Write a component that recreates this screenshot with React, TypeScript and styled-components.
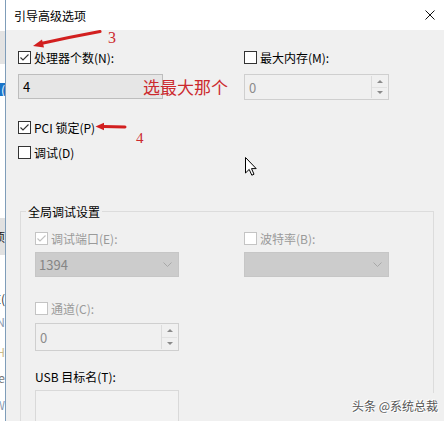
import React from "react";
import styled, { createGlobalStyle } from "styled-components";

const GlobalStyle = createGlobalStyle`
  html, body { margin: 0; padding: 0; background: #ffffff; }
  body {
    font-family: "Noto Sans CJK SC", "Noto Sans", sans-serif;
    width: 444px;
    height: 421px;
    overflow: hidden;
  }
  * { box-sizing: border-box; }
`;

const Page = styled.div`
  position: relative;
  display: flex;
  width: 444px;
  height: 421px;
  overflow: hidden;
`;

const Strip = styled.div`
  width: 5px;
  flex-shrink: 0;
  display: flex;
  flex-direction: column;
  overflow: hidden;
`;

const StripSeg = styled.div<{ $h: number; $bg: string; $fg?: string }>`
  height: ${(p) => p.$h}px;
  flex-shrink: 0;
  background: ${(p) => p.$bg};
  color: ${(p) => p.$fg ?? "#333"};
  font-size: 12px;
  line-height: ${(p) => p.$h}px;
  display: flex;
  justify-content: flex-end;
  overflow: hidden;
  white-space: nowrap;
`;

const Dialog = styled.div`
  flex: 1;
  display: flex;
  flex-direction: column;
  border-left: 1px solid #7f9db9;
  min-width: 0;
`;

const TitleBar = styled.div`
  height: 30px;
  flex-shrink: 0;
  background: #ffffff;
  display: flex;
  align-items: center;
  justify-content: space-between;
  padding: 0 9px 0 8px;
`;

const Title = styled.span`
  font-size: 12px;
  line-height: 17px;
  color: #000;
`;

const CloseIcon = styled.svg`
  width: 10px;
  height: 10px;
  display: block;
`;

const Body = styled.div`
  flex: 1;
  background: #f0f0f0;
  padding: 19px 0 0 12px;
  display: flex;
  flex-direction: column;
  align-items: flex-start;
`;

const TwoCol = styled.div<{ $cols: string; $gap: number }>`
  display: grid;
  grid-template-columns: ${(p) => p.$cols};
  column-gap: ${(p) => p.$gap}px;
`;

const Field = styled.div<{ $gap: number; $mt?: number }>`
  display: flex;
  flex-direction: column;
  gap: ${(p) => p.$gap}px;
  margin-top: ${(p) => p.$mt ?? 0}px;
`;

const OptionList = styled.div`
  display: flex;
  flex-direction: column;
  gap: 8px;
  margin-top: 19px;
`;

const CheckRow = styled.label`
  display: flex;
  align-items: center;
  gap: 3px;
  height: 17px;
`;

const Box = styled.span<{ $disabled?: boolean }>`
  width: 13px;
  height: 13px;
  flex-shrink: 0;
  border: 1px solid ${(p) => (p.$disabled ? "#c4c4c4" : "#333333")};
  background: #ffffff;
  display: flex;
  align-items: center;
  justify-content: center;
`;

const Label = styled.span<{ $disabled?: boolean }>`
  font-size: 12px;
  line-height: 17px;
  color: ${(p) => (p.$disabled ? "#9a9a9a" : "#000000")};
  white-space: nowrap;
`;

const TextBox = styled.div<{ $w: number; $h: number; $bg: string; $border: string; $fg?: string }>`
  width: ${(p) => p.$w}px;
  height: ${(p) => p.$h}px;
  background: ${(p) => p.$bg};
  border: 1px solid ${(p) => p.$border};
  color: ${(p) => p.$fg ?? "#000"};
  font-size: 13px;
  display: flex;
  align-items: center;
  padding-left: 4px;
`;

const SpinWrap = styled.div<{ $w: number; $h: number }>`
  width: ${(p) => p.$w}px;
  height: ${(p) => p.$h}px;
  border: 1px solid #cfcfcf;
  background: #f0f0f0;
  display: flex;
  align-items: stretch;
`;

const SpinValue = styled.span`
  flex: 1;
  display: flex;
  align-items: center;
  padding-left: 4px;
  font-size: 13px;
  color: #8c8c8c;
`;

const SpinButtons = styled.div`
  width: 16px;
  margin: 1px 1px 1px 0;
  border-left: 1px solid #dcdcdc;
  display: flex;
  flex-direction: column;
`;

const SpinBtn = styled.div<{ $top?: boolean }>`
  flex: 1;
  display: flex;
  align-items: center;
  justify-content: center;
  border-bottom: ${(p) => (p.$top ? "1px solid #e2e2e2" : "none")};
`;

const Tri = styled.span<{ $up?: boolean }>`
  width: 0;
  height: 0;
  border-left: 3px solid transparent;
  border-right: 3px solid transparent;
  ${(p) => (p.$up ? "border-bottom: 3px solid #8a8a8a;" : "border-top: 3px solid #8a8a8a;")}
`;

const SelectBox = styled.div<{ $w: number }>`
  width: ${(p) => p.$w}px;
  height: 25px;
  background: #cccccc;
  border: 1px solid #c6c6c6;
  display: flex;
  align-items: center;
  justify-content: space-between;
  padding: 0 6px 0 3px;
  font-size: 13px;
  color: #858585;
`;

const Chevron = styled.svg`
  width: 9px;
  height: 5px;
  display: block;
`;

const Group = styled.fieldset`
  width: 414px;
  margin: 42px 0 0 2px;
  padding: 0;
  border: 1px solid #dcdcdc;
  min-width: 0;
`;

const Legend = styled.legend`
  margin-left: 5px;
  padding: 0 2px;
  font-size: 12px;
  line-height: 17px;
  color: #000;
`;

const GroupInner = styled.div`
  padding: 10px 0 0 14px;
  display: flex;
  flex-direction: column;
  align-items: flex-start;
  height: 240px;
`;

const Overlay = styled.svg`
  position: absolute;
  left: 0;
  top: 0;
  width: 444px;
  height: 421px;
  pointer-events: none;
`;

const RedNote = styled.span<{ $x: number; $y: number; $size: number; $serif?: boolean }>`
  position: absolute;
  left: ${(p) => p.$x}px;
  top: ${(p) => p.$y}px;
  font-size: ${(p) => p.$size}px;
  line-height: ${(p) => p.$size}px;
  font-family: ${(p) =>
    p.$serif ? '"Liberation Serif", "DejaVu Serif", serif' : '"Noto Sans CJK SC", sans-serif'};
  color: #cc2a2e;
  white-space: nowrap;
  pointer-events: none;
`;

const Cursor = styled.svg`
  position: absolute;
  left: 245px;
  top: 157px;
  width: 12px;
  height: 19px;
  pointer-events: none;
`;

const Watermark = styled.div`
  position: absolute;
  right: 0;
  bottom: 0;
  width: 100px;
  height: 28px;
  background: #f0f0f0;
  padding: 4px 0 0 8px;
  font-size: 12px;
  line-height: 17px;
  color: #555;
  white-space: nowrap;
  text-shadow: 0 0 1px #fff, 1px 1px 0 #fff, -1px -1px 0 #fff;
`;

const stripSegments: { h: number; bg: string; fg?: string; text?: string }[] = [
  { h: 31, bg: "#ffffff" },
  { h: 33, bg: "#e3e3e3" },
  { h: 19, bg: "#ffffff" },
  { h: 13, bg: "#1a74c9", fg: "#ffffff", text: "(" },
  { h: 122, bg: "#ffffff" },
  { h: 37, bg: "#e1e1e1", fg: "#222", text: "项" },
  { h: 35, bg: "#ffffff" },
  { h: 17, bg: "#ffffff", fg: "#333", text: "E(" },
  { h: 7, bg: "#ffffff" },
  { h: 16, bg: "#ffffff", fg: "#8a9ab0", text: "N" },
  { h: 14, bg: "#ffffff" },
  { h: 16, bg: "#ffffff", fg: "#c9b98a", text: "H" },
  { h: 10, bg: "#ffffff" },
  { h: 16, bg: "#ffffff", fg: "#777", text: "e" },
  { h: 11, bg: "#ffffff" },
  { h: 16, bg: "#ffffff", fg: "#8a9ab0", text: "W" },
  { h: 20, bg: "#ffffff" },
];

function Check({ label, checked, disabled }: { label: string; checked?: boolean; disabled?: boolean }) {
  return (
    <CheckRow>
      <Box $disabled={disabled}>
        {checked && (
          <svg width="11" height="11" viewBox="0 0 11 11">
            <polyline
              points="1.5,5.5 4,8 9.5,2.5"
              fill="none"
              stroke={disabled ? "#c0c0c0" : "#333"}
              strokeWidth="1.1"
            />
          </svg>
        )}
      </Box>
      <Label $disabled={disabled}>{label}</Label>
    </CheckRow>
  );
}

function Spin({ w, h, value }: { w: number; h: number; value: string }) {
  return (
    <SpinWrap $w={w} $h={h}>
      <SpinValue>{value}</SpinValue>
      <SpinButtons>
        <SpinBtn $top>
          <Tri $up />
        </SpinBtn>
        <SpinBtn>
          <Tri />
        </SpinBtn>
      </SpinButtons>
    </SpinWrap>
  );
}

function Select({ w, value }: { w: number; value: string }) {
  return (
    <SelectBox $w={w}>
      <span>{value}</span>
      <Chevron viewBox="0 0 9 5">
        <polyline points="0.5,0.5 4.5,4.5 8.5,0.5" fill="none" stroke="#a8a8a8" strokeWidth="1" />
      </Chevron>
    </SelectBox>
  );
}

export default function App() {
  return (
    <>
      <GlobalStyle />
      <Page>
        <Strip>
          {stripSegments.map((s, i) => (
            <StripSeg key={i} $h={s.h} $bg={s.bg} $fg={s.fg}>
              {s.text ?? ""}
            </StripSeg>
          ))}
        </Strip>
        <Dialog>
          <TitleBar>
            <Title>引导高级选项</Title>
            <CloseIcon viewBox="0 0 10 10">
              <line x1="0.5" y1="0.5" x2="9.5" y2="9.5" stroke="#111" strokeWidth="1" />
              <line x1="9.5" y1="0.5" x2="0.5" y2="9.5" stroke="#111" strokeWidth="1" />
            </CloseIcon>
          </TitleBar>
          <Body>
            <TwoCol $cols="145px 145px" $gap={81}>
              <Field $gap={8}>
                <Check checked label="处理器个数(N):" />
                <TextBox $w={145} $h={25} $bg="#e6e6e6" $border="#bdbdbd">
                  4
                </TextBox>
              </Field>
              <Field $gap={8}>
                <Check label="最大内存(M):" />
                <Spin w={145} h={26} value="0" />
              </Field>
            </TwoCol>
            <OptionList>
              <Check checked label="PCI 锁定(P)" />
              <Check label="调试(D)" />
            </OptionList>
            <Group>
              <Legend>全局调试设置</Legend>
              <GroupInner>
                <TwoCol $cols="144px 145px" $gap={65}>
                  <Field $gap={5}>
                    <Check checked disabled label="调试端口(E):" />
                    <Select w={144} value="1394" />
                  </Field>
                  <Field $gap={5}>
                    <Check disabled label="波特率(B):" />
                    <Select w={145} value="" />
                  </Field>
                </TwoCol>
                <Field $gap={6} $mt={23}>
                  <Check disabled label="通道(C):" />
                  <Spin w={144} h={28} value="0" />
                </Field>
                <Field $gap={5} $mt={17}>
                  <Label>USB 目标名(T):</Label>
                  <TextBox $w={144} $h={32} $bg="#f2f2f2" $border="#d9d9d9" />
                </Field>
              </GroupInner>
            </Group>
          </Body>
        </Dialog>

        <Overlay viewBox="0 0 444 421">
          <path d="M100 31.5 Q70 37 41 43.5" fill="none" stroke="#d21f1f" strokeWidth="3.2" strokeLinecap="round" />
          <polygon points="33,46 42,39.5 44,47.5" fill="#d21f1f" />
          <path d="M125 127 L103 126.5" fill="none" stroke="#d21f1f" strokeWidth="3" strokeLinecap="round" />
          <polygon points="95.5,126.5 104,122.8 104,130.2" fill="#d21f1f" />
        </Overlay>
        <RedNote $x={108} $y={30} $size={16} $serif>
          3
        </RedNote>
        <RedNote $x={136} $y={131} $size={15} $serif>
          4
        </RedNote>
        <RedNote $x={143} $y={78} $size={17}>
          选最大那个
        </RedNote>
        <Cursor viewBox="0 0 12 19">
          <polygon
            points="0.5,0.5 0.5,16 4.2,12.4 6.8,18.2 9,17.2 6.5,11.6 11.2,11.6"
            fill="#ffffff"
            stroke="#000"
            strokeWidth="1"
            strokeLinejoin="miter"
          />
        </Cursor>
        <Watermark>头条 @系统总裁</Watermark>
      </Page>
    </>
  );
}
